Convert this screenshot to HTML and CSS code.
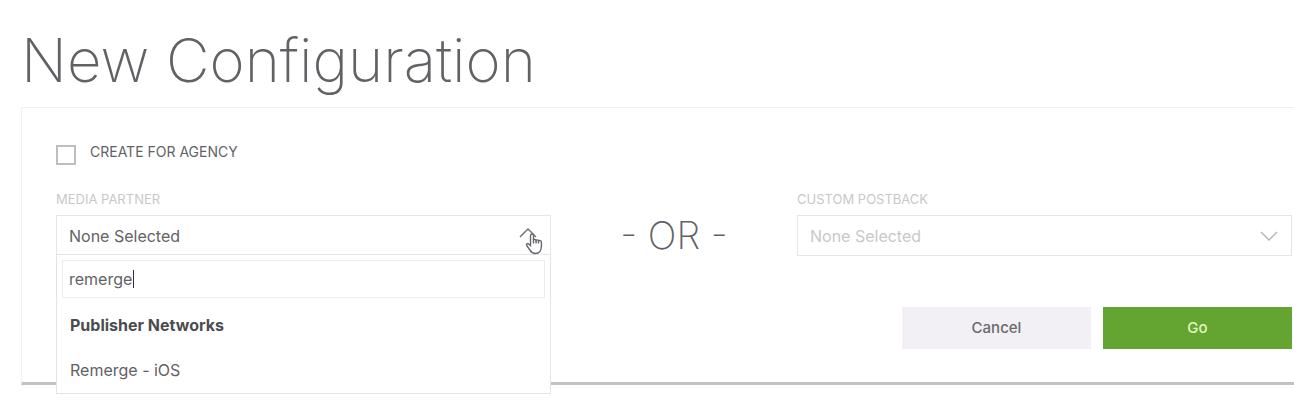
FILE: index.html
```html
<!DOCTYPE html>
<html lang="en">
<head>
<meta charset="utf-8">
<title>New Configuration</title>
<link rel="stylesheet" href="styles.css">
</head>
<body>
<main class="page">
  <h1 class="title">New Configuration</h1>
  <form class="panel">
    <label class="agency"><input class="agency-box" type="checkbox"><span>CREATE FOR AGENCY</span></label>
    <div class="choices">
      <div class="field">
        <label class="field-label" for="partner">MEDIA PARTNER</label>
        <div class="select-wrap">
          <select class="select" id="partner"><option>None Selected</option></select>
          <svg class="chevron" viewBox="0 0 18 10" aria-hidden="true"><path d="M1 9 9 1l8 8"/></svg>
          <div class="menu">
            <div class="search-wrap">
              <input class="search" type="text" value="remerge" aria-label="Search media partners">
              <span class="caret"></span>
            </div>
            <ul class="options">
              <li class="option group">Publisher Networks</li>
              <li class="option">Remerge - iOS</li>
            </ul>
          </div>
          <svg class="pointer" viewBox="0 0 18 22" aria-hidden="true"><path d="M5.500 13V3.200c0-2.300 3-2.300 3 0v4.300c.4-1 2.400-.8 2.600.3.600-.8 2.200-.5 2.400.5.900-.7 2.900-.3 2.900 1.400v4.100c0 4.200-2.200 7.200-5.900 7.200-3 0-4.400-1.500-5.500-3.400L1.700 13c-.8-1.400.8-2.500 1.900-1.500z"/><path d="M8.500 7v4M11.100 8v3M13.500 8.500V11"/></svg>
        </div>
      </div>
      <div class="or">- OR -</div>
      <div class="field disabled">
        <label class="field-label" for="postback">CUSTOM POSTBACK</label>
        <div class="select-wrap">
          <select class="select" id="postback" disabled><option>None Selected</option></select>
          <svg class="chevron" viewBox="0 0 18 10" aria-hidden="true"><path d="m1 1 8 8 8-8"/></svg>
        </div>
      </div>
    </div>
    <div class="actions">
      <button class="button" type="button">Cancel</button>
      <button class="button primary" type="submit">Go</button>
    </div>
  </form>
</main>
</body>
</html>
```
FILE: styles.css
```css
* { box-sizing: border-box; }
body {
  margin: 0;
  background: #fff;
  color: #626266;
  font: 16px/20px Inter, "Liberation Sans", sans-serif;
}
.page { padding: 28px 0 16px 21px; }
.title {
  margin: 0 0 15px;
  font-size: 60px;
  line-height: 64px;
  font-weight: 200;
}
.panel {
  padding: 34px 2px 33px 34px;
  border: 1px solid #f3f0f3;
  border-right: 0;
  border-bottom: 3px solid #c3c3c3;
}
.agency {
  display: flex;
  gap: 14px;
  width: max-content;
  font-size: 14px;
}
.agency-box {
  appearance: none;
  width: 20px;
  height: 20px;
  margin: 3px 0 0;
  border: 2px solid #bebebe;
  background: #fff;
}
.choices {
  display: grid;
  grid-template-columns: 1fr 246px 1fr;
  align-items: end;
  margin-top: 24px;
}
.field-label {
  display: block;
  margin-bottom: 6px;
  color: #c8c8ca;
  font-size: 13px;
}
.select-wrap { position: relative; }
.select {
  appearance: none;
  display: block;
  width: 100%;
  height: 41px;
  padding: 0 44px 0 12px;
  border: 1px solid #e6e6e8;
  border-radius: 0;
  background: #fff;
  color: inherit;
  font: inherit;
  opacity: 1;
}
.disabled .select { color: #c8c8ca; }
.chevron {
  position: absolute;
  top: 16px;
  right: 14px;
  width: 18px;
  height: 10px;
  fill: none;
  stroke: #77777a;
  stroke-width: 1.5;
  pointer-events: none;
}
.field:not(.disabled) .chevron { top: 13px; }
.disabled .chevron { stroke: #b8b8ba; }
.menu {
  position: absolute;
  z-index: 1;
  top: 39px;
  left: 0;
  right: 0;
  padding: 5px 5px 0;
  border: 1px solid #e4e4e8;
  background: #fff;
}
.search-wrap { position: relative; }
.search {
  display: block;
  width: 100%;
  height: 38px;
  padding: 0 6px;
  border: 1px solid #ececee;
  border-radius: 0;
  color: inherit;
  font: inherit;
}
.caret {
  position: absolute;
  top: 10px;
  left: 71px;
  width: 1px;
  height: 18px;
  background: #333;
}
.options {
  margin: 0;
  padding: 5px 8px 0;
  list-style: none;
}
.option { line-height: 45px; }
.group { font-weight: 700; color: #4c4c50; }
.pointer {
  position: absolute;
  z-index: 2;
  top: 17px;
  right: 8px;
  width: 18px;
  height: 23px;
  fill: #fff;
  stroke: #66666d;
  stroke-width: 1.4;
}
.or {
  height: 41px;
  font-size: 38px;
  line-height: 41px;
  font-weight: 200;
  text-align: center;
}
.actions {
  display: flex;
  justify-content: flex-end;
  gap: 12px;
  margin-top: 51px;
}
.button {
  width: 189px;
  height: 42px;
  border: 0;
  background: #f2f0f4;
  color: #69696c;
  font: inherit;
  font-size: 15px;
  font-weight: 500;
}
.primary { background: #64a430; color: #e3f7bd; }
```
